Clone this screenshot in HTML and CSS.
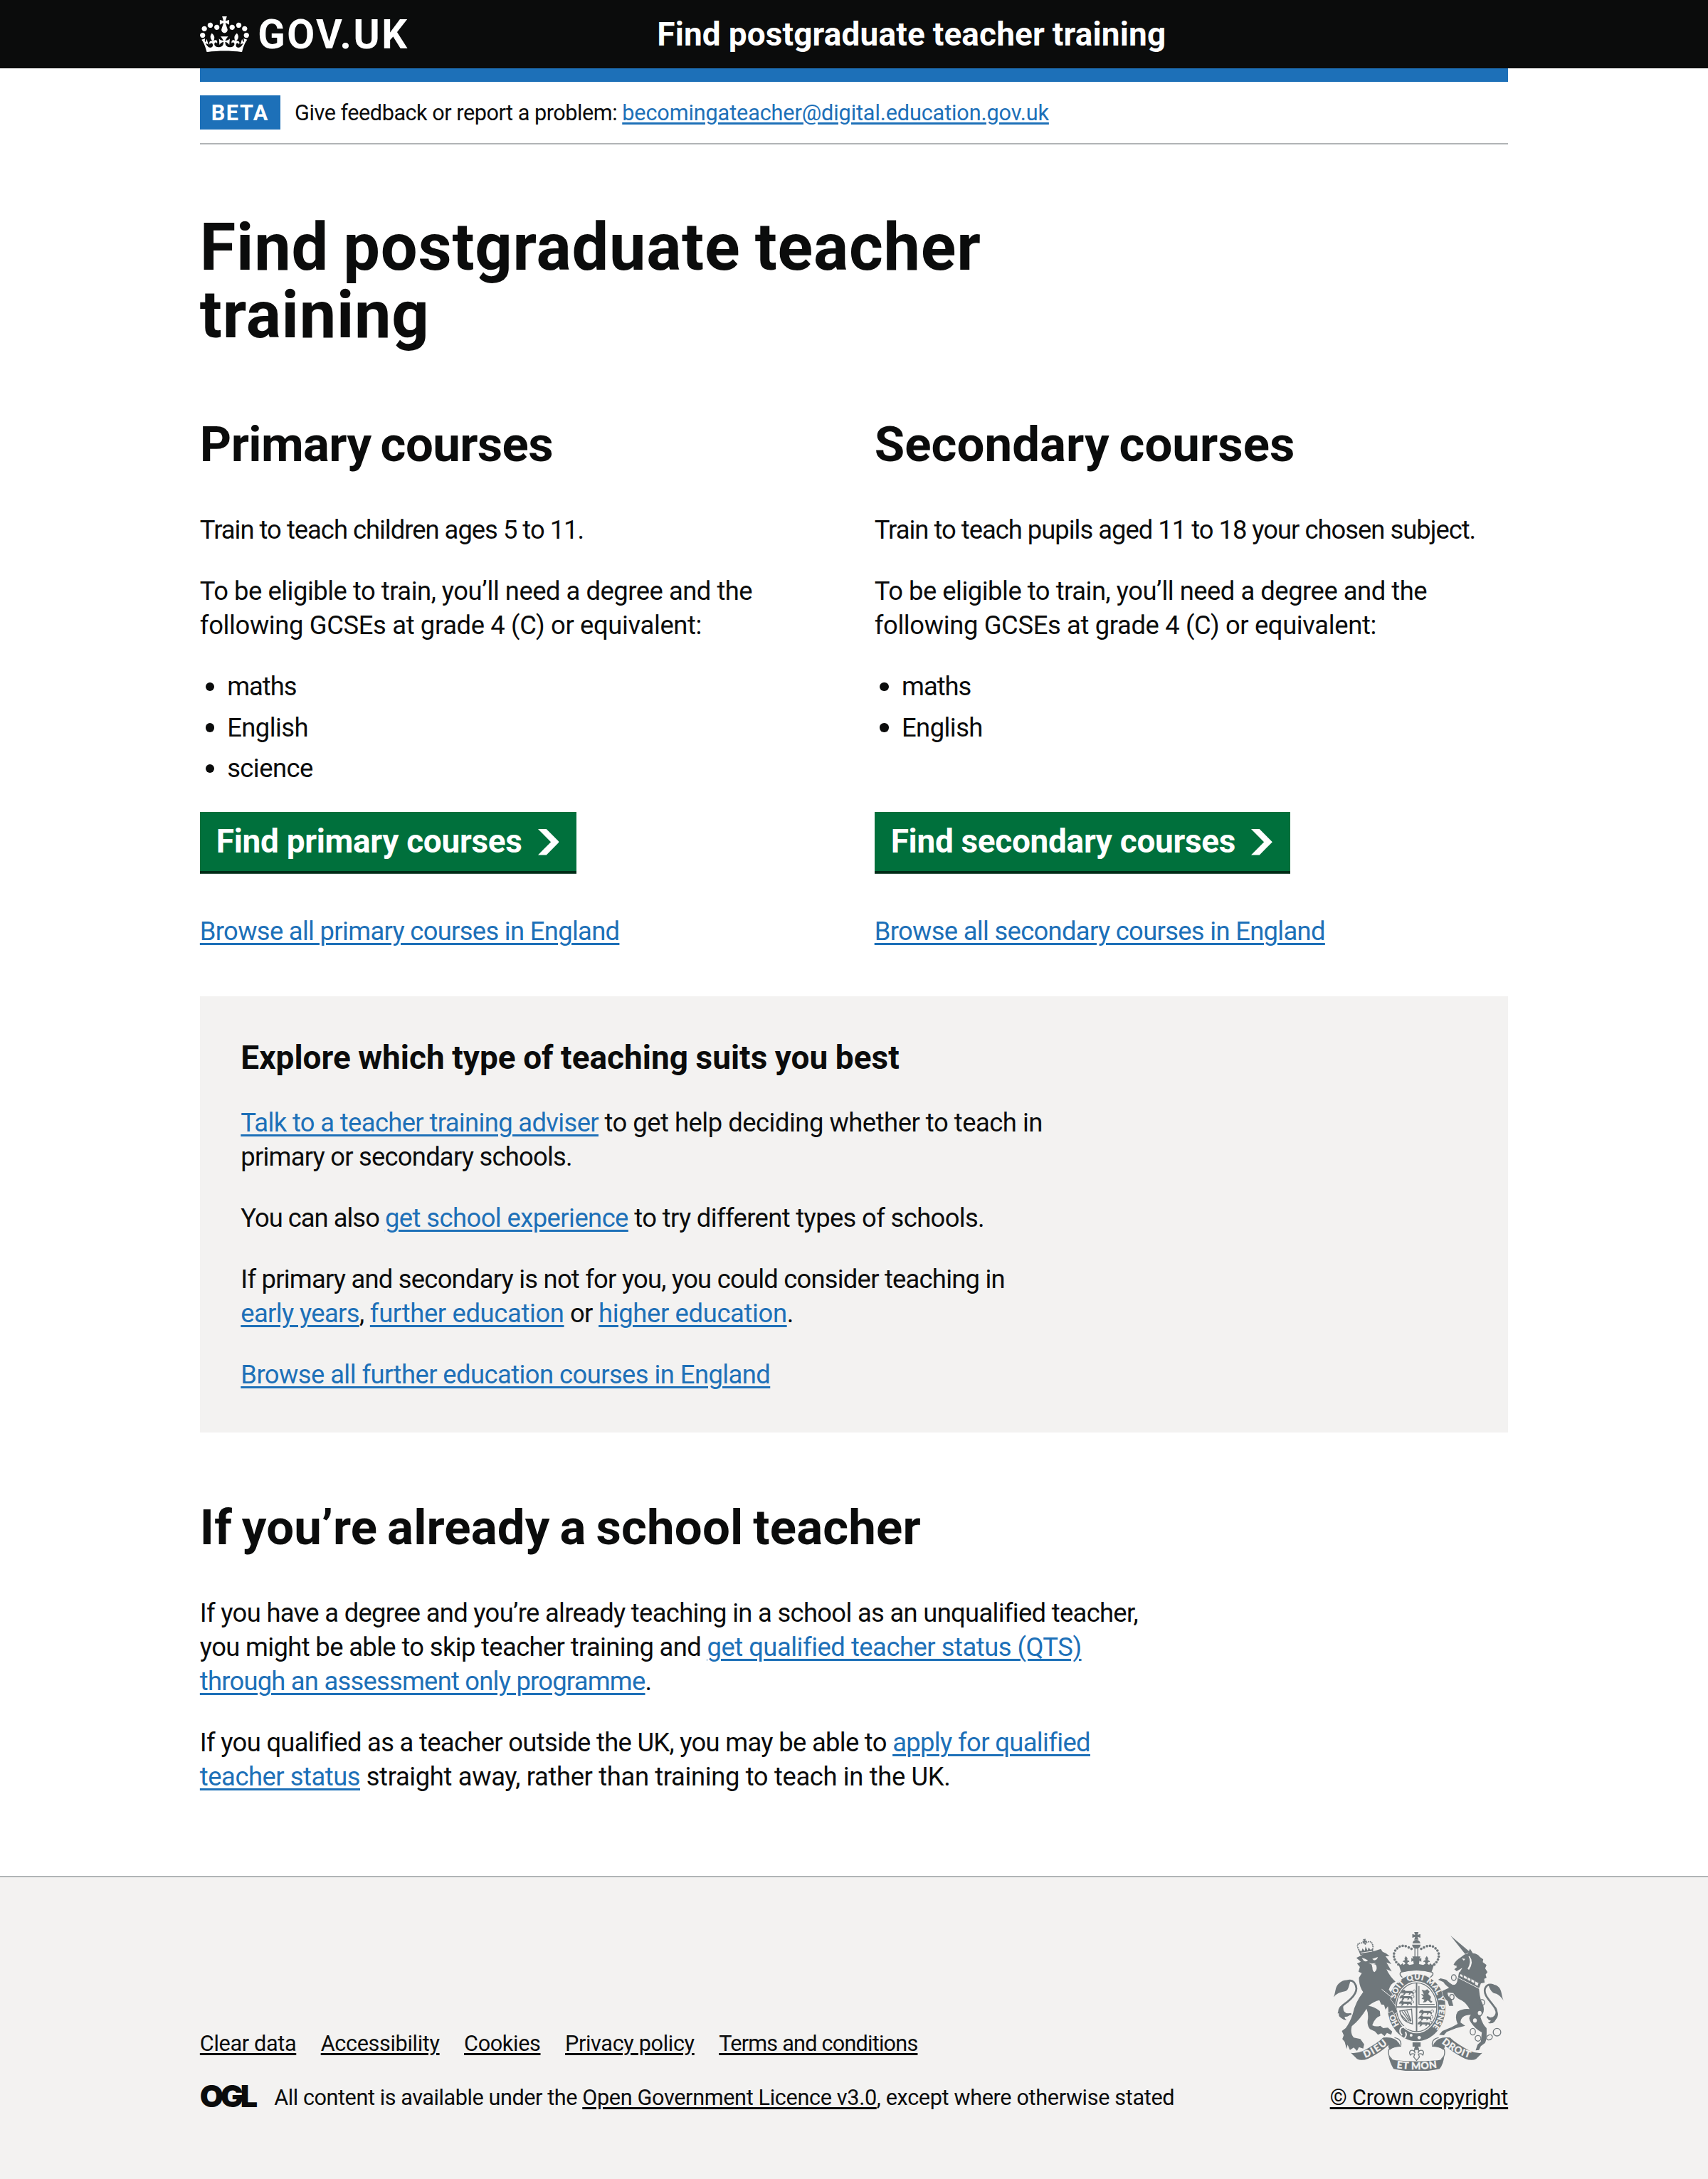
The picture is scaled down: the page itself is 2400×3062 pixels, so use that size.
FILE: index.html
```html
<!DOCTYPE html>
<html lang="en">
<head>
<meta charset="utf-8">
<title>Find postgraduate teacher training</title>
<link rel="stylesheet" href="styles.css">
</head>
<body>
<header class="header">
  <div class="container header-row">
    <a class="logo" href="#">
      <svg class="logo-crown" viewBox="0 0 132 97" aria-hidden="true"><path fill="currentColor" fill-rule="evenodd" d="M25 30.2c3.5 1.5 7.7-.2 9.1-3.7 1.5-3.6-.2-7.8-3.9-9.2-3.6-1.4-7.6.3-9.1 3.9-1.4 3.5.3 7.5 3.9 9zM9 39.5c3.6 1.5 7.8-.2 9.2-3.7 1.5-3.6-.2-7.8-3.9-9.1-3.6-1.5-7.6.2-9.1 3.8-1.4 3.5.3 7.5 3.8 9zM4.4 57.2c3.5 1.5 7.7-.2 9.1-3.8 1.5-3.6-.2-7.7-3.9-9.1-3.5-1.5-7.6.3-9.1 3.8-1.4 3.5.3 7.6 3.9 9.1zm38.3-21.4c3.5 1.5 7.7-.2 9.1-3.8 1.5-3.6-.2-7.7-3.9-9.1-3.6-1.5-7.6.3-9.1 3.8-1.3 3.6.4 7.7 3.9 9.1zm64.4-5.6c-3.6 1.5-7.8-.2-9.1-3.7-1.5-3.6.2-7.8 3.8-9.2 3.6-1.4 7.7.3 9.2 3.9 1.3 3.5-.4 7.5-3.9 9zm15.9 9.3c-3.6 1.5-7.7-.2-9.1-3.7-1.5-3.6.2-7.8 3.7-9.1 3.6-1.5 7.7.2 9.2 3.8 1.5 3.5-.3 7.5-3.8 9zm4.7 17.7c-3.6 1.5-7.8-.2-9.2-3.8-1.5-3.6.2-7.7 3.9-9.1 3.6-1.5 7.7.3 9.2 3.8 1.3 3.5-.4 7.6-3.9 9.1zM89.3 35.8c-3.6 1.5-7.8-.2-9.2-3.8-1.4-3.6.2-7.7 3.9-9.1 3.6-1.5 7.7.3 9.2 3.8 1.4 3.6-.3 7.7-3.9 9.1zM69.7 17.7l8.9 4.7V9.3l-8.9 2.8c-.2-.3-.5-.6-.9-.9L72.4 0H59.6l3.5 11.2c-.3.3-.6.5-.9.9l-8.8-2.8v13.1l8.8-4.7c.3.3.6.7.9.9l-5 15.4v.1c-.2.8-.4 1.6-.4 2.4 0 4.1 3.1 7.5 7 8.1h.2c.3 0 .7.1 1 .1.4 0 .7 0 1-.1h.2c4-.6 7.1-4.1 7.1-8.1 0-.8-.1-1.7-.4-2.4V34l-5.1-15.4c.4-.2.7-.6 1-.9zM66 92.8c16.9 0 32.8 1.1 47.1 3.2 4-16.9 8.9-26.7 14-33.5l-9.6-3.4c1 4.9 1.1 7.2 0 10.2-1.5-1.4-3-4.3-4.2-8.7L108.6 76c2.8-2 5-3.2 7.5-3.3-4.4 9.4-10 11.9-13.6 11.2-4.3-.8-6.3-4.6-5.6-7.9 1-4.7 5.7-5.9 8-.5 4.3-8.7-3-11.4-7.6-8.8 7.1-7.2 7.9-13.5 2.1-21.1-8 6.1-8.1 12.3-4.5 20.8-4.7-5.4-12.1-2.5-9.5 6.2 3.4-5.2 7.9-2 7.2 3.1-.6 4.3-6.4 7.8-13.5 7.2-10.3-.9-10.9-8-11.2-13.8 2.5-.5 7.1 1.8 11 7.3L80.2 60c-4.1 4.4-8 5.3-12.3 5.4 1.4-4.4 8-11.6 8-11.6H55.5s6.4 7.2 7.9 11.6c-4.2-.1-8-1-12.3-5.4l1.4 16.4c3.9-5.5 8.5-7.7 10.9-7.3-.3 5.8-.9 12.8-11.1 13.8-7.2.6-12.9-2.9-13.5-7.2-.7-5 3.8-8.3 7.1-3.1 2.7-8.7-4.6-11.6-9.4-6.2 3.7-8.5 3.6-14.7-4.6-20.8-5.8 7.6-5 13.9 2.2 21.1-4.7-2.6-11.9.1-7.7 8.8 2.3-5.5 7.1-4.2 8.1.5.7 3.3-1.3 7.1-5.7 7.9-3.5.7-9-1.8-13.5-11.2 2.5.1 4.7 1.3 7.5 3.3l-4.7-15.4c-1.2 4.4-2.7 7.2-4.3 8.7-1.1-3-.9-5.3 0-10.2l-9.5 3.4c5 6.9 9.9 16.7 14 33.5 14.8-2.1 30.8-3.2 47.7-3.2z"/></svg>
      <span class="logo-text">GOV.UK</span>
    </a>
    <a class="service-name" href="#">Find postgraduate teacher training</a>
  </div>
</header>
<div class="container">
  <div class="accent-bar"></div>
  <div class="phase-banner">
    <strong class="tag">BETA</strong>
    <span class="phase-text">Give feedback or report a problem: <a class="link" href="#">becomingateacher@digital.education.gov.uk</a></span>
  </div>

  <main class="main">
    <h1 class="heading-xl">Find postgraduate teacher<br>training</h1>

    <div class="columns">
      <section class="column">
        <h2 class="heading-l track-snug">Primary courses</h2>
        <p class="body track-1">Train to teach children ages 5 to 11.</p>
        <p class="body track-5">To be eligible to train, you’ll need a degree and the<br><span class="track-6">following GCSEs at grade 4 (C) or equivalent:</span></p>
        <ul class="list">
          <li class="track-1">maths</li>
          <li>English</li>
          <li>science</li>
        </ul>
        <a class="button" href="#">Find primary courses
          <svg class="button-icon" viewBox="0 0 33 40" preserveAspectRatio="none" aria-hidden="true"><path fill="currentColor" d="M0 0h13l20 20-20 20H0l20-20z"/></svg>
        </a>
        <p class="body track-3"><a class="link" href="#">Browse all primary courses in England</a></p>
      </section>
      <section class="column">
        <h2 class="heading-l">Secondary courses</h2>
        <p class="body track-1">Train to teach pupils aged 11 to 18 your chosen subject.</p>
        <p class="body track-5">To be eligible to train, you’ll need a degree and the<br><span class="track-6">following GCSEs at grade 4 (C) or equivalent:</span></p>
        <ul class="list">
          <li class="track-1">maths</li>
          <li>English</li>
        </ul>
        <a class="button" href="#">Find secondary courses
          <svg class="button-icon" viewBox="0 0 33 40" preserveAspectRatio="none" aria-hidden="true"><path fill="currentColor" d="M0 0h13l20 20-20 20H0l20-20z"/></svg>
        </a>
        <p class="body track-3"><a class="link" href="#">Browse all secondary courses in England</a></p>
      </section>
    </div>

    <section class="panel">
      <h2 class="heading-m">Explore which type of teaching suits you best</h2>
      <p class="body"><a class="link" href="#">Talk to a teacher training adviser</a> <span class="track-5">to get help deciding whether to teach in</span><br><span class="track-2">primary or secondary schools.</span></p>
      <p class="body"><span class="track-1">You can also </span><a class="link track-4" href="#">get school experience</a> to try different types of schools.</p>
      <p class="body"><span class="track-2">If primary and secondary is not for you, you could consider teaching in</span><br><a class="link" href="#">early years</a>, <a class="link track-6" href="#">further education</a> or <a class="link track-6" href="#">higher education</a>.</p>
      <p class="body track-4"><a class="link" href="#">Browse all further education courses in England</a></p>
    </section>

    <section class="already">
      <h2 class="heading-l track-wide">If you’re already a school teacher</h2>
      <p class="body"><span class="track-3">If you have a degree and you’re already teaching in a school as an unqualified teacher,</span><br><span>you might be able to skip teacher training and </span><a class="link" href="#"><span class="track-5">get qualified teacher status (QTS)</span><br><span class="track-2">through an assessment only programme</span></a>.</p>
      <p class="body"><span class="track-3">If you qualified as a teacher outside the UK, you may be able to </span><a class="link" href="#">apply for qualified<br><span class="track-5">teacher status</span></a><span class="track-6"> straight away, rather than training to teach in the UK.</span></p>
    </section>
  </main>
</div>

<footer class="footer">
  <div class="container footer-row">
    <div class="footer-main">
      <nav class="footer-links">
        <a class="footer-link" href="#">Clear data</a>
        <a class="footer-link" href="#">Accessibility</a>
        <a class="footer-link" href="#">Cookies</a>
        <a class="footer-link" href="#">Privacy policy</a>
        <a class="footer-link track-1" href="#">Terms and conditions</a>
      </nav>
      <div class="licence">
        <span class="ogl">OGL</span>
        <span><span class="licence-lead">All content is available under the </span><a class="footer-link" href="#">Open Government Licence v3.0</a>, except where otherwise stated</span>
      </div>
    </div>
    <div class="footer-meta">
      <svg class="crest" viewBox="43.5 39 718 586" aria-hidden="true">
        <defs>
          <path id="garter" d="M393 473A95 117 0 1 1 394 473"/>
          <path id="dieu" d="M176 570Q232 548 276 506"/>
          <path id="etmon" d="M308 612Q393 624 482 611"/>
          <path id="droit" d="M498 507Q556 554 622 572"/>
          <g id="lion-passant">
            <path class="c-fill" d="M0 9l6-7 8-2 4 5 26 0 8 4 2 9-4 4-3-6-6-2-4 6-6 2 3-7-14-1-6 8-7 1 4-8-5-3-7 3z"/>
            <path class="c-thin" d="M48 6q8-10 12-2q2 8-4 8M12 6l-8 10"/>
          </g>
        </defs>

        <g id="shield">
          <ellipse class="c-fill" cx="393" cy="358" rx="122" ry="141"/>
          <ellipse class="c-light" cx="393" cy="356" rx="90" ry="110"/>
          <text class="c-motto garter"><textPath href="#garter" startOffset="88" textLength="50">HO</textPath></text>
          <text class="c-motto garter"><textPath href="#garter" startOffset="202" textLength="78">SOIT</textPath></text>
          <text class="c-motto garter"><textPath href="#garter" startOffset="294" textLength="66">QUI</textPath></text>
          <text class="c-motto garter"><textPath href="#garter" startOffset="374" textLength="74">MAL</textPath></text>
          <text class="c-motto garter"><textPath href="#garter" startOffset="456" textLength="20">Y</textPath></text>
          <text class="c-motto garter"><textPath href="#garter" startOffset="488" textLength="102">PENSE</textPath></text>
          <ellipse class="c-line" cx="393" cy="356" rx="85" ry="103"/>
          <path class="c-cross" d="M393 254v204M308 355h170"/>
          <use href="#lion-passant" x="328" y="282"/><use href="#lion-passant" x="322" y="304"/><use href="#lion-passant" x="320" y="327"/>
          <use href="#lion-passant" x="404" y="366"/><use href="#lion-passant" x="402" y="390"/><use href="#lion-passant" x="398" y="414"/>
          <path class="c-line" d="M403 266v78h66"/>
          <path class="c-fill" d="M414 282l14 4 10-6 10 10-6 10 12 12-4 14 10 6-6 6-14-12-8 8-12 2 6-12-12-4 8-8-10-12 12 2z"/>
          <path class="c-line" d="M322 372l50-8 4 62q-46-8-54-54zM332 374l30 42M342 372l26 44M352 370l18 44M324 384l30 32"/>
          <path class="c-fill" d="M336 456Q360 474 396 470Q430 468 452 452L462 468Q450 492 396 498Q350 496 328 474z"/>
          <circle class="c-light" cx="370" cy="474" r="6"/><circle class="c-light" cx="404" cy="484" r="7"/>
          <path class="c-belt" d="M326 444q18-12 30 2M326 444q-8 18 6 30M346 460q8 16-4 26"/>
        </g>

        <g id="lion">
          <path class="c-tail" d="M118 384C70 396 50 372 84 346C134 312 152 280 130 252C116 236 96 244 84 258"/>
          <path class="c-fill" d="M43 314C52 296 48 270 66 255C82 241 102 238 114 246C108 262 108 276 98 286C86 292 62 290 43 314zM84 350q-20 12-24 32l6 0q-4 12 10 20q8 8 22 8q-10-8-8-14q18 2 26-14q-36 6-32-32z"/>
          <path class="c-fill c-edge" d="M139 148L160 137Q190 118 212 120L242 110L250 122Q268 128 279 140L262 141L287 174L266 167L288 205L266 196Q280 226 304 248Q284 254 276 282L290 300L282 322L304 352L312 376L300 384L290 370L276 378L272 352L262 366L256 346L244 344L236 326Q214 330 190 350Q214 352 238 372L240 392Q216 400 206 432Q222 440 240 434L252 444L272 442L290 458L286 472L268 464L258 478L244 466L230 472L218 458L196 448Q182 430 188 404Q190 380 182 362Q154 408 120 436Q112 466 128 484L156 490L172 512L168 530L150 524L142 540L128 526L112 536L102 514L98 532L90 502L80 490L86 474L78 456L94 444Q112 420 124 384Q134 336 168 292Q150 268 150 232L162 212L148 206L154 186L142 172L158 164z"/>
          <path class="c-light" d="M162 148q14 2 26 10q-8 8-18 2zM206 152l24-8q-4 14-16 14zM204 178q12-6 18 0q8 18-6 30q-10-4-9-18zM190 168l12 4 20-2-16 8z"/>
          <path class="c-line c-light-line" d="M246 280L290 316"/>
          <g transform="rotate(-9 178 102)">
            <path class="c-fill" d="M146 108l5 24h54l5-24-12 10-8-12-6 12-6-18-6 18-8-12-6 12zM172 68h12l-3 8 6-1v8l-7-1v10h-4v-10l-7 1v-8l6 1z"/>
            <path class="c-line c-light-line" d="M153 124h50"/>
            <path class="c-dots small" d="M148 108Q138 82 160 82T178 92Q182 82 196 82T209 108"/>
          </g>
        </g>

        <g id="unicorn">
          <path class="c-tail" d="M690 396C722 420 744 396 724 360C706 330 672 306 682 276C692 254 716 258 726 274"/>
          <path class="c-fill" d="M760 328C750 310 754 284 738 270C724 258 708 258 696 262C700 278 708 290 718 296C734 298 748 310 760 328zM726 352q14 24 6 48l-10 16q-10 12-28 6q10-2 12-10q-12 0-16-16q44 14 36-44z"/>
          <path class="c-fill" d="M536 54L617 122L598 132z"/>
          <path class="c-fill" d="M549 176Q558 158 578 146L594 134L610 128L618 109L630 128Q652 130 660 144L674 154L672 166L688 178L682 192L692 208L684 218L688 232L678 236L680 252L662 256L574 210L586 190L572 198L562 204L552 196L564 186z"/>
          <path class="c-light" d="M584 150l14 2-6 8zM616 140q20 24-2 58l-6-4q18-30 4-52zM553 182l12-2-10 6z"/>
          <path class="c-fill" d="M572 208L664 256L656 276L568 230z"/>
          <path class="c-light" d="M578 216l8 4 2 10-12-6zM592 222l12 6 0 10-12-6zM608 230l12 6 0 10-12-6zM624 238l12 6 0 10-12-6zM640 247l14 7-4 12-10-6z"/>
          <path class="c-fill c-edge" d="M566 232L656 278Q658 304 664 326Q690 372 662 396Q672 430 688 444Q690 490 682 506L664 520L656 536L642 538L650 514L664 500L668 462Q640 448 622 420Q608 400 622 388Q580 388 578 420L598 434L560 444L520 460L508 474L488 472L502 456L540 440L566 426Q552 396 566 374Q590 360 616 364Q604 340 584 328Q560 318 548 296L524 294Q522 310 540 322L548 350L530 350L524 330Q506 318 500 288L530 274Q512 262 506 250L484 240L494 234L518 240Q534 256 546 262Q566 262 566 232z"/>
          <g class="c-line"><ellipse cx="550" cy="231" rx="10" ry="12"/><ellipse cx="542" cy="313" rx="9" ry="11"/><ellipse cx="669" cy="336" rx="11" ry="12"/><ellipse cx="630" cy="459" rx="11" ry="14"/><ellipse cx="652" cy="487" rx="12" ry="12"/><ellipse cx="700" cy="483" rx="13" ry="10" transform="rotate(-30 700 483)"/><circle cx="732" cy="461" r="16"/></g>
          <g class="c-light"><ellipse cx="659" cy="380" rx="8" ry="9"/><ellipse cx="639" cy="412" rx="8" ry="9"/><ellipse cx="552" cy="254" rx="6" ry="7"/></g>
        </g>

        <g id="crown">
          <path class="c-fill" d="M383 39h18l-4 12 12-4v16l-12-4 4 12h-18l4-12-12 4v-16l12 4zM376 86q2-14 16-14t17 14zM374 92h36q-2 12-10 15v40h-4v-38h-8v38h-4v-40q-8-3-10-15z"/>
          <path class="c-dots" d="M316 176Q290 150 300 122Q320 88 352 100Q368 108 376 112"/>
          <path class="c-dots" d="M468 176Q494 150 484 122Q464 88 432 100Q416 108 408 112"/>
          <path class="c-fill" d="M314 166l12 12 8-8 4 8 8-6-6-8-6 2q4-10 10-8l-2-8 6-10 7 10-2 8q8-2 10 8l-6-2-4 8 10 6 18-4-2-14-8 4v-16l8 4-4-10h34l-4 10 8-4v16l-8-4-2 14 18 4 10-6-4-8-6 2q2-10 10-8l-2-8 7-10 6 10-2 8q6-2 10 8l-6-2-6 8 8 6 4-8 8 8 12-12-14 42q-64-16-128 0z"/>
          <path class="c-line" d="M327 208q66-18 130 0q8 4 4 12l-10 10M327 208q-6 6-2 14l8 8"/>
        </g>

        <g id="ribbon">
          <path class="c-line" d="M300 484Q332 490 326 520Q296 520 276 534Q270 560 288 574M486 484Q454 490 460 520Q490 520 510 534Q516 560 498 574"/>
          <path class="c-fill" d="M116 548Q140 552 168 540Q226 510 252 484Q300 478 318 506Q324 514 324 522Q296 520 280 536Q270 520 276 514Q238 550 190 572Q160 584 142 574zM670 548Q644 552 618 540Q560 510 534 484Q486 478 468 506Q462 514 462 522Q490 520 506 536Q516 520 510 514Q548 550 596 572Q626 584 644 574z"/>
          <path class="c-fill" d="M274 558Q282 578 306 580Q393 588 480 580Q504 578 510 560Q506 596 490 616Q450 626 393 626Q336 626 296 616Q280 590 274 558z"/>
          <text class="c-motto"><textPath href="#dieu" textLength="112">DIEU</textPath></text>
          <text class="c-motto base"><textPath href="#etmon" textLength="172">ET MON</textPath></text>
          <text class="c-motto"><textPath href="#droit" textLength="134">DROIT</textPath></text>
          <path class="c-fill" d="M376 504h34v18l-10 0v14h-14v-14h-10z"/>
          <path class="c-line" d="M393 516q-14 16-6 34q-4-16-18-12q-10 8-2 20q6-10 18-4l-4 12 12 14 12-14-4-12q12-6 18 4q8-12-2-20q-14-4-18 12q8-18-6-34z"/>
        </g>
      </svg>
      <a class="footer-link copyright" href="#">© Crown copyright</a>
    </div>
  </div>
</footer>
</body>
</html>
```
FILE: styles.css
```css
html { font-size: 19.149px; }

*, *::before, *::after { box-sizing: border-box; }

body {
  margin: 0;
  min-height: 100vh;
  display: flex;
  flex-direction: column;
  background: #fff;
  color: #0b0c0c;
  font: 400 1.9rem/2.5rem Roboto, "Liberation Sans", sans-serif;
  white-space: nowrap;
}

h1, h2, p, ul { margin: 0; padding: 0; }

.container { width: 96rem; margin: 0 auto; }

/* Header */
.header { height: 5rem; background: #0b0c0c; color: #fff; }
.header-row { display: grid; grid-template-columns: 33.55rem 1fr; height: 5rem; }
.header a { color: #fff; text-decoration: none; }
.logo { display: flex; align-items: center; padding-bottom: .2rem; }
.logo-crown { width: 3.6rem; height: 2.65rem; margin-right: .65rem; }
.logo-text { padding-top: .2rem; font-size: 2.95rem; font-weight: 700; line-height: 4.8rem; letter-spacing: .045em; }
.service-name { font-size: 2.4rem; font-weight: 700; line-height: 5.05rem; letter-spacing: .0032em; word-spacing: -.015em; }

.accent-bar { height: 1rem; background: #1d70b8; }

/* Phase banner */
.phase-banner {
  display: flex;
  align-items: center;
  gap: 1.06rem;
  padding: 1rem 0;
  border-bottom: 2px solid #b1b4b6;
  font-size: 1.6rem;
}
.tag {
  width: 5.9rem;
  padding-top: .1rem;
  line-height: 2.4rem;
  background: #1d70b8;
  color: #fff;
  font-weight: 700;
  text-align: center;
  letter-spacing: .05em;
}
.phase-text { padding-top: .1rem; line-height: 2.4rem; letter-spacing: -.0155em; }
.phase-text .link { letter-spacing: -.004em; }

/* Type */
.heading-xl { font-size: 4.8rem; line-height: 5rem; letter-spacing: .0083em; word-spacing: -.035em; }
.heading-l { font-size: 3.6rem; line-height: 4rem; letter-spacing: .001em; word-spacing: -.05em; margin-bottom: 3rem; }
.heading-l.track-snug { letter-spacing: -.009em; }
.heading-l.track-wide { letter-spacing: .0025em; }
.heading-m { font-size: 2.4rem; line-height: 3rem; letter-spacing: .0005em; word-spacing: -.02em; margin-bottom: 2rem; }
.body { letter-spacing: -.0175em; }
.body + .body { margin-top: 2rem; }
.link { color: #1d70b8; text-decoration: underline; text-decoration-thickness: .14rem; text-underline-offset: .1em; }

/* Tracking steps, tightest first */
.track-1 { letter-spacing: -.0275em; }
.track-2 { letter-spacing: -.0212em; }
.track-3 { letter-spacing: -.0188em; }
.track-4 { letter-spacing: -.0155em; }
.track-5 { letter-spacing: -.0132em; }
.track-6 { letter-spacing: -.0098em; }

.main { padding: 5.05rem 0 6rem; }

/* Course columns */
.columns { display: grid; grid-template-columns: 1fr 1fr; gap: 3rem; margin-top: 5rem; }
.column { display: flex; flex-direction: column; align-items: flex-start; }
.list { list-style: none; margin: 2rem 0 1.45rem; letter-spacing: -.015em; }
.list li { display: flex; align-items: center; margin-bottom: .5rem; }
.list li::before {
  content: "";
  width: .65rem;
  height: .65rem;
  margin: 0 .95rem 0 .4rem;
  border-radius: 50%;
  background: currentColor;
}
.button {
  display: flex;
  align-items: center;
  gap: 1.15rem;
  height: 4.3rem;
  margin: auto 0 3.23rem;
  padding: .1rem 1.3rem 0 1.2rem;
  background: #00703c;
  box-shadow: 0 .2rem 0 #002d18;
  color: #fff;
  font-size: 2.4rem;
  font-weight: 700;
  letter-spacing: -.0066em;
  text-decoration: none;
}
.button-icon { width: 1.56rem; height: 1.9rem; }

/* Panel */
.panel { margin-top: 3.47rem; padding: 3.05rem 3rem 2.95rem; background: #f3f2f1; }
.already { margin-top: 5.06rem; }

/* Footer */
.footer {
  flex: 1;
  padding-top: 4rem;
  border-top: 2px solid #b1b4b6;
  background: #f3f2f1;
  font-size: 1.6rem;
  line-height: 2rem;
  letter-spacing: -.0113em;
}
.footer-row { display: flex; justify-content: space-between; align-items: flex-end; }
.footer-links { display: flex; gap: 1.8rem; margin-bottom: 1.95rem; }
.footer-link { color: inherit; text-decoration: underline; text-decoration-thickness: .14rem; text-underline-offset: .1em; }
.footer-link.track-1 { letter-spacing: -.0255em; }
.licence-lead { letter-spacing: -.0142em; }
.copyright { letter-spacing: -.006em; }
.licence { display: flex; align-items: center; gap: 1.35rem; }
.ogl {
  width: 4.1rem;
  margin-top: -.3rem;
  font-family: Inter, sans-serif;
  font-size: 2.25rem;
  font-weight: 900;
  line-height: 1.5rem;
  letter-spacing: -.105em;
}
.footer-meta { display: flex; flex-direction: column; align-items: center; gap: 1rem; }
.crest { display: block; width: 12.5rem; height: 10.2rem; }

/* Crest artwork */
.c-fill { fill: #6f777b; }
.c-edge { stroke: #f3f2f1; stroke-width: 4; paint-order: stroke; }
.c-light { fill: #f3f2f1; }
.c-line, .c-thin, .c-tail, .c-cross, .c-dots, .c-belt { fill: none; stroke: #6f777b; }
.c-line { stroke-width: 4; }
.c-thin { stroke-width: 3; }
.c-tail { stroke-width: 8; }
.c-cross { stroke-width: 6; }
.c-light-line { stroke: #f3f2f1; stroke-width: 3; }
.c-belt { stroke: #f3f2f1; stroke-width: 6; }
.c-dots { stroke-width: 11; stroke-linecap: round; stroke-dasharray: 0 13; }
.c-dots.small { stroke-width: 6; stroke-dasharray: 0 8; }
.c-motto { fill: #f3f2f1; stroke: #f3f2f1; stroke-width: .8; font: 900 40px Lato, sans-serif; letter-spacing: 0; }
.c-motto.base { font-size: 42px; }
.c-motto.garter { font-size: 33px; }
```
